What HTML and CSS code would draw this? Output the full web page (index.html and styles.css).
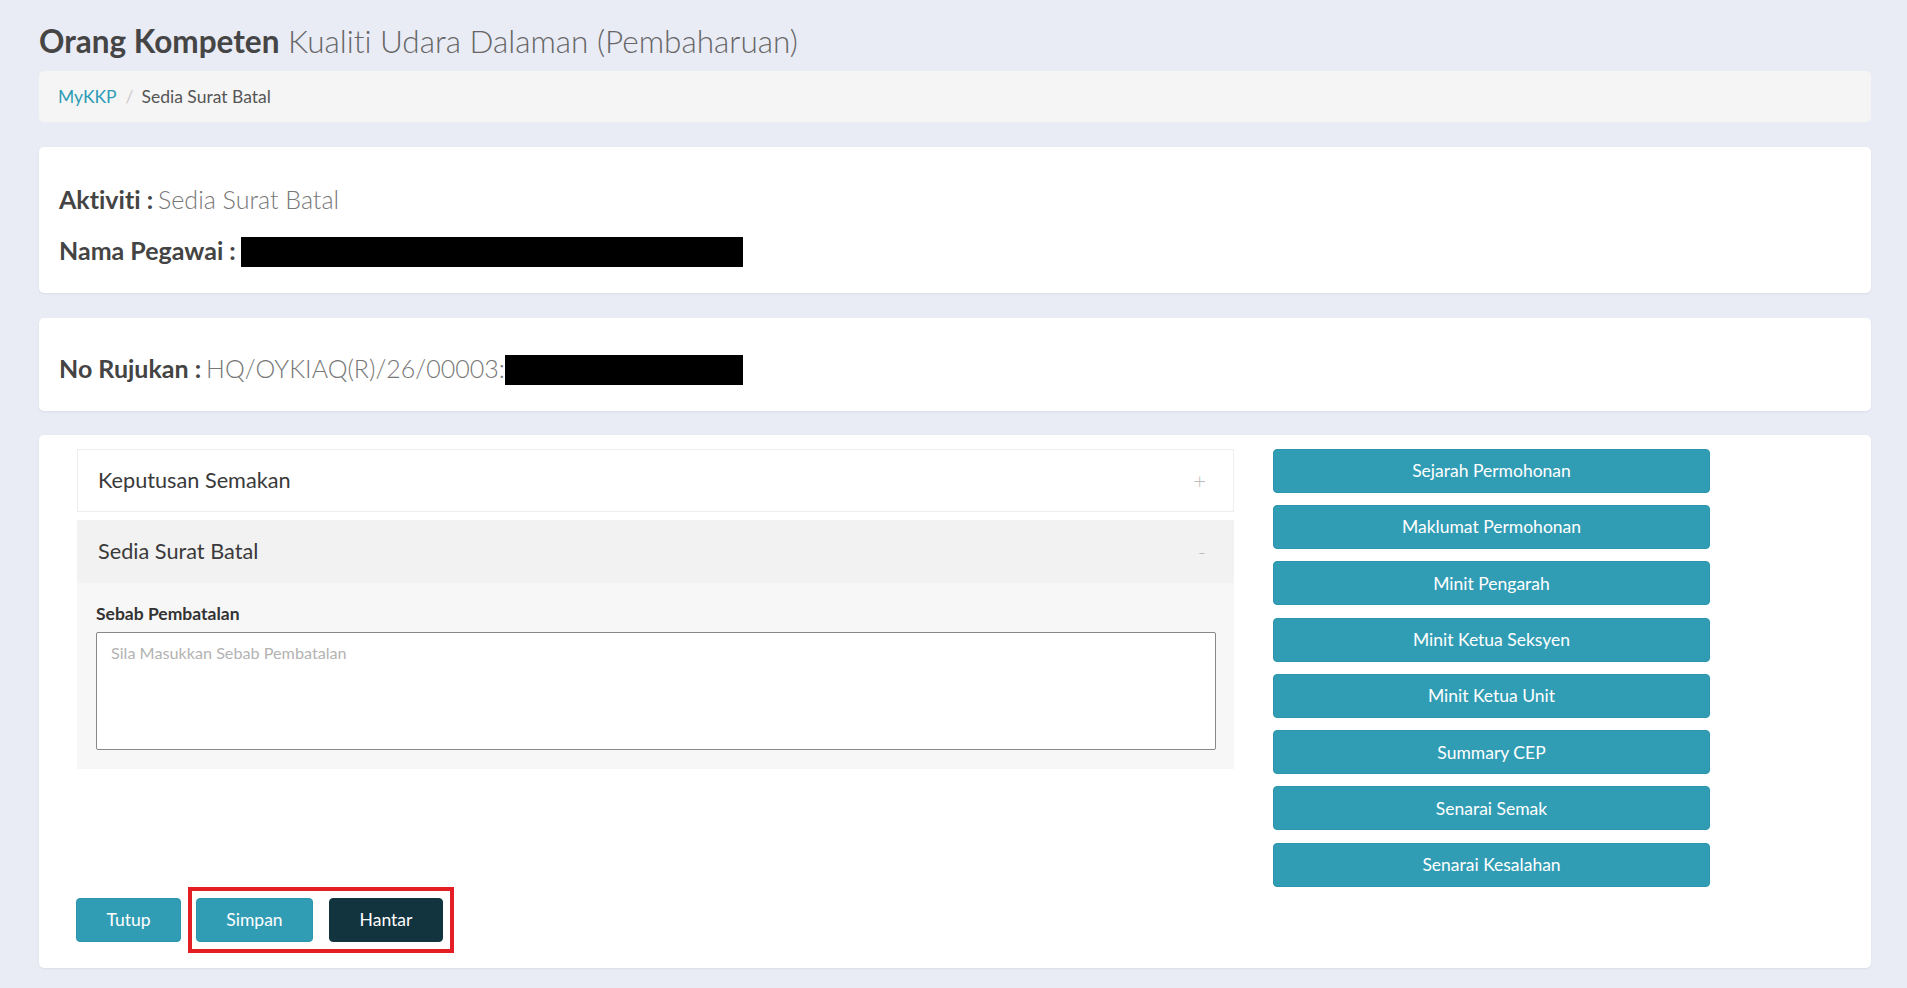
FILE: index.html
```html
<!DOCTYPE html>
<html lang="ms">
  <head>
    <meta charset="UTF-8" />
    <meta name="viewport" content="width=device-width, initial-scale=1.0" />
    <title>Sedia Surat Batal - MyKKP</title>
    <link rel="stylesheet" href="styles.css">
  </head>
  <body>
    <div class="page">
      <h1 class="page-title">
        <strong>Orang Kompeten</strong> Kualiti Udara Dalaman (Pembaharuan)
      </h1>

      <ol class="breadcrumb">
        <li><a href="#">MyKKP</a></li>
        <li class="active">Sedia Surat Batal</li>
      </ol>

      <div class="card info-card">
        <h4 class="info-line"><b>Aktiviti :</b> <span class="info-value">Sedia Surat Batal</span></h4>
        <h4 class="info-line"><b>Nama Pegawai :</b> <span class="redacted name-redacted"></span></h4>
      </div>

      <div class="card info-card ref-card">
        <h4 class="info-line"><b>No Rujukan :</b> <span class="info-value">HQ/OYKIAQ(R)/26/00003:</span><span class="redacted ref-redacted"></span></h4>
      </div>

      <div class="card work-card">
        <div class="work-area">
          <div class="accordion">
            <div class="panel">
              <div class="panel-heading">
                <span>Keputusan Semakan</span>
                <span class="toggle">+</span>
              </div>
            </div>

            <div class="panel open">
              <div class="panel-heading">
                <span>Sedia Surat Batal</span>
                <span class="toggle">-</span>
              </div>
              <div class="panel-body">
                <label for="sebab">Sebab Pembatalan</label>
                <textarea id="sebab" name="sebab" placeholder="Sila Masukkan Sebab Pembatalan"></textarea>
              </div>
            </div>
          </div>

          <div class="side-actions">
            <button class="btn btn-info">Sejarah Permohonan</button>
            <button class="btn btn-info">Maklumat Permohonan</button>
            <button class="btn btn-info">Minit Pengarah</button>
            <button class="btn btn-info">Minit Ketua Seksyen</button>
            <button class="btn btn-info">Minit Ketua Unit</button>
            <button class="btn btn-info">Summary CEP</button>
            <button class="btn btn-info">Senarai Semak</button>
            <button class="btn btn-info">Senarai Kesalahan</button>
          </div>
        </div>

        <div class="form-actions">
          <button class="btn btn-info btn-tutup">Tutup</button>
          <div class="highlight">
            <button class="btn btn-info btn-simpan">Simpan</button>
            <button class="btn btn-dark btn-hantar">Hantar</button>
          </div>
        </div>
      </div>
    </div>
  </body>
</html>
```

FILE: styles.css
```css
body {
  margin: 0;
  background-color: #e9ecf5;
  font-family: Lato, "Open Sans", sans-serif;
  font-variant-ligatures: no-common-ligatures;
  color: #333;
}
.page {
  padding: 0 36px 20px 39px;
}
.page-title {
  margin: 24px 0 12px;
  font-size: 31.5px;
  line-height: 1.1;
  font-weight: 300;
  color: #666;
}
.page-title strong {
  font-weight: 700;
  color: #454545;
}

/* breadcrumb */
.breadcrumb {
  list-style: none;
  margin: 0 0 25px;
  padding: 13px 19px;
  background-color: #f5f5f5;
  border-radius: 5px;
  font-size: 17.5px;
  line-height: 25px;
  display: flex;
}
.breadcrumb a {
  color: #2e9cb5;
  text-decoration: none;
}
.breadcrumb .active {
  color: #555;
}
.breadcrumb li + li::before {
  content: "/";
  color: #ccc;
  padding: 0 8px 0 9px;
}

/* cards */
.card {
  background-color: #fff;
  border-radius: 5px;
  box-shadow: 0 1px 2px rgba(40, 50, 90, 0.08);
  margin-bottom: 25px;
}
.info-card {
  padding: 37px 20px 28px;
}
.ref-card {
  padding-top: 35px;
  margin-bottom: 24px;
}
.info-line {
  margin: 0;
  font-size: 25px;
  line-height: 30px;
  font-weight: 400;
  color: #444;
  display: flex;
  align-items: center;
}
.info-line + .info-line {
  margin-top: 21px;
}
.info-line b {
  font-weight: 700;
  margin-right: 5px;
}
.info-value {
  font-weight: 300;
  color: #777;
}
.redacted {
  display: inline-block;
  height: 30px;
  margin: 2px 0 -2px;
  background-color: #000;
}
.name-redacted {
  width: 502px;
}
.ref-redacted {
  width: 238px;
}

/* work area */
.work-card {
  padding: 14px 38px 15px;
  margin-bottom: 0;
}
.work-area {
  display: flex;
  align-items: flex-start;
  gap: 39px;
}
.accordion {
  width: 1157px;
}
.panel {
  margin-bottom: 8px;
}
.panel-heading {
  display: flex;
  justify-content: space-between;
  align-items: center;
  height: 63px;
  padding: 0 27px 0 20px;
  box-sizing: border-box;
  font-size: 21.7px;
  color: #3a3a3a;
  border: 1px solid #eee;
  background-color: #fff;
}
.panel.open .panel-heading {
  background-color: #f2f2f2;
  border-color: #f2f2f2;
}
.toggle {
  font-weight: 300;
  color: #bbb;
  font-size: 22px;
}
.panel-body {
  background-color: #f7f7f7;
  padding: 20px 18px 19px 19px;
}
.panel-body label {
  display: block;
  font-size: 17.5px;
  font-weight: 700;
  color: #333;
  line-height: 22px;
  margin-bottom: 7px;
}
.panel-body textarea {
  display: block;
  width: 100%;
  height: 118px;
  box-sizing: border-box;
  padding: 9px 14px;
  border: 1px solid #888;
  border-radius: 2px;
  font-family: Lato, sans-serif;
  font-size: 16.2px;
  line-height: 22px;
  resize: none;
}
.panel-body textarea::placeholder {
  color: #b3b3b3;
}

/* buttons */
.btn {
  font-family: Lato, sans-serif;
  font-size: 17.5px;
  color: #fff;
  border: 1px solid transparent;
  border-radius: 4px;
  height: 44px;
  cursor: pointer;
}
.btn-info {
  background-color: #319db5;
  border-color: #2b95ad;
}
.btn-dark {
  background-color: #12343f;
  border-color: #12343f;
}
.side-actions {
  width: 437px;
  display: flex;
  flex-direction: column;
  gap: 12.3px;
}
.form-actions {
  display: flex;
  align-items: center;
  margin-left: -1px;
}
.btn-tutup {
  width: 105px;
}
.highlight {
  display: flex;
  gap: 16px;
  margin-left: 7px;
  padding: 7px 7px 7px 4px;
  border: 4px solid #e31e24;
}
.btn-simpan {
  width: 117px;
}
.btn-hantar {
  width: 114px;
}
```
